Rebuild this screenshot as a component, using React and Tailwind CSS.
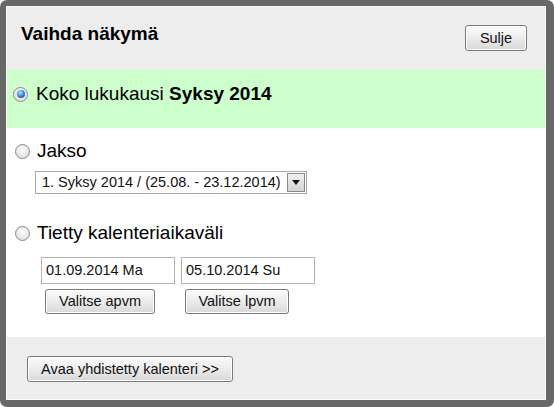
function Radio({ checked }) {
  return (
    <span className="relative flex h-[15px] w-[15px] shrink-0 items-center justify-center rounded-full border border-[#8a8a8a] bg-[radial-gradient(circle_at_50%_40%,#ffffff,#d6d6d6)]">
      {checked ? (
        <span className="h-[8px] w-[8px] rounded-full bg-[radial-gradient(circle_at_40%_35%,#b6e3ff,#2a7ed6_55%,#0b3f86)]" />
      ) : null}
    </span>
  );
}

function Btn({ className = "", children }) {
  return (
    <button
      className={
        "flex items-center justify-center rounded-[3px] border border-[#7a7a7a] bg-gradient-to-b from-[#fbfbfb] via-[#ececec] to-[#d8d8d8] text-[14.5px] leading-none text-[#111] shadow-[inset_0_0_0_1px_#ffffff] " +
        className
      }
    >
      {children}
    </button>
  );
}

function DateCol({ value, label, btnWidth }) {
  return (
    <div className="flex flex-col">
      <div className="flex h-[27px] w-[134px] items-center border border-[#b4b4b4] bg-white pl-[4px] text-[14.5px] text-[#111]">
        {value}
      </div>
      <Btn className={"ml-[4px] mt-[5px] h-[25px] " + btnWidth}>{label}</Btn>
    </div>
  );
}

export default function App() {
  return (
    <div
      className="h-[407px] w-[554px] bg-white text-black"
      style={{ fontFamily: '"Liberation Sans", Arial, sans-serif' }}
    >
      <div className="h-full w-full rounded-[7px] border-b-[7px] border-l-[6px] border-r-[8px] border-t-[6px] border-[#686868]">
        <div className="flex h-full flex-col border border-[#fafafa]">
          {/* header */}
          <div className="flex h-[63px] shrink-0 items-start justify-between bg-[#ededed] pl-[14px] pr-[18px] pt-[16px]">
            <h2 className="text-[19px] font-bold leading-[22px]">Vaihda näkymä</h2>
            <Btn className="mt-[2px] h-[26px] w-[62px]">Sulje</Btn>
          </div>

          {/* whole term */}
          <div className="flex h-[58px] shrink-0 items-start bg-[#ccffcc] pl-[6px] pt-[13px]">
            <div className="flex items-center gap-[8px]">
              <Radio checked />
              <span className="text-[19px] leading-[22px]">
                Koko lukukausi <b>Syksy 2014</b>
              </span>
            </div>
          </div>

          {/* period + range */}
          <div className="flex h-[209px] shrink-0 flex-col bg-white pl-[8px] pt-[12px]">
            <div className="flex items-center gap-[7px]">
              <Radio />
              <span className="text-[19px] leading-[22px]">Jakso</span>
            </div>
            <div className="ml-[20px] mt-[9px] flex h-[23px] w-[272px] items-center justify-between border border-[#a8a8a8] bg-white pl-[6px] pr-[1px]">
              <span className="text-[14.5px] text-[#111]">1. Syksy 2014 / (25.08. - 23.12.2014)</span>
              <span className="flex h-[19px] w-[18px] items-center justify-center border border-[#8c8c8c] bg-gradient-to-b from-[#f0f0f0] to-[#d4d4d4]">
                <svg width="8" height="5" viewBox="0 0 8 5">
                  <path d="M0 0h8L4 5z" fill="#111" />
                </svg>
              </span>
            </div>

            <div className="mt-[28px] flex items-center gap-[7px]">
              <Radio />
              <span className="text-[19px] leading-[22px]">Tietty kalenteriaikaväli</span>
            </div>
            <div className="ml-[26px] mt-[13px] flex gap-[6px]">
              <DateCol value="01.09.2014 Ma" label="Valitse apvm" btnWidth="w-[110px]" />
              <DateCol value="05.10.2014 Su" label="Valitse lpvm" btnWidth="w-[104px]" />
            </div>
          </div>

          {/* footer */}
          <div className="flex flex-1 items-start bg-[#ededed] pl-[20px] pt-[19px]">
            <Btn className="h-[26px] w-[206px]">Avaa yhdistetty kalenteri &gt;&gt;</Btn>
          </div>
        </div>
      </div>
    </div>
  );
}
